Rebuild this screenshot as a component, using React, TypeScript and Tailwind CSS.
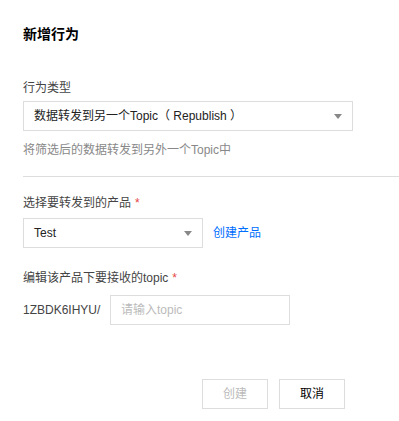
import { useState } from 'react'

const font = { fontFamily: '"Liberation Sans", "Noto Sans CJK SC", sans-serif' }

function Arrow() {
  return (
    <svg width="8" height="5" viewBox="0 0 8 5" className="shrink-0">
      <path d="M0 0H8L4 5Z" fill="#888" />
    </svg>
  )
}

function Label({ text, required }: { text: string; required?: boolean }) {
  return (
    <div className="h-[18px] leading-[18px] text-[12px] text-[#444]">
      {text}
      {required && <span className="ml-1 text-[#e54545]">*</span>}
    </div>
  )
}

export default function App() {
  const [topic, setTopic] = useState('')

  return (
    <div className="w-[399px] h-[421px] bg-white pl-[23px] pt-[24px]" style={font}>
      <h2 className="h-5 leading-5 text-[14px] font-bold text-black">新增行为</h2>

      <div className="mt-[35px]">
        <Label text="行为类型" />
        <div className="mt-[4px] w-[330px] h-[30px] border border-[#ddd] flex items-center justify-between pl-[10px] pr-[10px] text-[12px] text-[#222]">
          <span>数据转发到另一个Topic（ Republish ）</span>
          <Arrow />
        </div>
        <p className="mt-[10px] h-[18px] leading-[18px] text-[12px] text-[#888]">将筛选后的数据转发到另外一个Topic中</p>
      </div>

      <div className="mt-[17px] h-px bg-[#ddd]" />

      <div className="mt-[17px]">
        <Label text="选择要转发到的产品" required />
        <div className="mt-[6px] flex items-center">
          <div className="w-[180px] h-[30px] border border-[#ddd] flex items-center justify-between pl-[10px] pr-[10px] text-[12px] text-[#222]">
            <span>Test</span>
            <Arrow />
          </div>
          <a className="ml-[10px] text-[12px] text-[#006eff] cursor-pointer">创建产品</a>
        </div>
      </div>

      <div className="mt-[21px]">
        <Label text="编辑该产品下要接收的topic" required />
        <div className="mt-[8px] flex items-center">
          <span className="w-[87px] text-[12px] text-[#444]">1ZBDK6IHYU/</span>
          <input
            className="w-[180px] h-[30px] border border-[#ddd] px-[10px] text-[12px] text-[#222] placeholder-[#bbb] outline-none"
            placeholder="请输入topic"
            value={topic}
            onChange={(e) => setTopic(e.target.value)}
          />
        </div>
      </div>

      <div className="mt-[54px] flex gap-[11px] pl-[179px]">
        <button disabled className="w-[66px] h-[30px] border border-[#ddd] bg-white text-[12px] text-[#bbb]">创建</button>
        <button className="w-[66px] h-[30px] border border-[#ddd] bg-white text-[12px] text-black">取消</button>
      </div>
    </div>
  )
}
